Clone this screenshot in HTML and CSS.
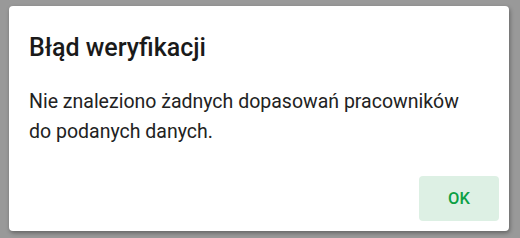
FILE: index.html
```html
<!DOCTYPE html>
<html lang="pl">
<head>
    <meta charset="UTF-8">
    <meta name="viewport" content="width=device-width, initial-scale=1.0">
    <link rel="stylesheet" href="styles.css">
    <title>Błąd weryfikacji</title>
</head>
<body>
    <div class="dialog">
        <h2 class="dialog-title">Błąd weryfikacji</h2>
        <p class="dialog-text">Nie znaleziono żadnych dopasowań pracowników do podanych danych.</p>
        <div class="dialog-actions">
            <button type="button" class="btn-ok">OK</button>
        </div>
    </div>
</body>
</html>
```

FILE: styles.css
```css
* {
    margin: 0;
    padding: 0;
    box-sizing: border-box;
    font-family: Roboto, "Liberation Sans", sans-serif;
}
body {
    background: #999999;
    width: 520px;
    height: 238px;
    padding: 6px 11px 7px 9px;
}
.dialog {
    background: #ffffff;
    width: 500px;
    height: 225px;
    border-radius: 4px;
    box-shadow: 1px 2px 4px rgba(0, 0, 0, 0.35);
    display: flex;
    flex-direction: column;
}
.dialog-title {
    font-size: 25px;
    font-weight: 500;
    color: #1a1a1a;
    line-height: 30px;
    padding: 27px 20px 0 20px;
}
.dialog-text {
    font-size: 19.5px;
    color: #222222;
    line-height: 29.5px;
    padding: 24px 20px 0 20px;
    width: 470px;
}
.dialog-actions {
    margin-top: auto;
    display: flex;
    justify-content: flex-end;
    padding: 0 10px 10px 0;
}
.btn-ok {
    background: #ddf0e4;
    color: #0ca045;
    border: none;
    border-radius: 4px;
    width: 80px;
    height: 45px;
    font-size: 16.5px;
    font-weight: 500;
    cursor: pointer;
}
```
